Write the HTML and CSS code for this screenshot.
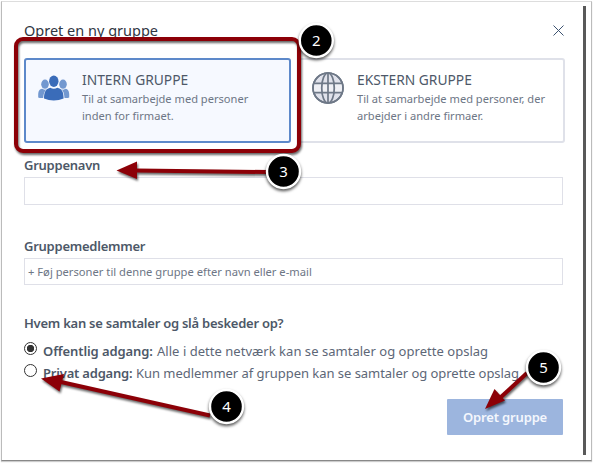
FILE: index.html
```html
<!DOCTYPE html>
<html lang="da">
<head>
  <meta charset="UTF-8">
  <meta name="viewport" content="width=device-width, initial-scale=1.0">
  <title>Opret en ny gruppe</title>
  <link rel="stylesheet" href="styles.css">
</head>
<body>
  <div class="modal">
    <form class="group-form">
      <header class="modal-header">
        <h1>Opret en ny gruppe</h1>
        <svg class="close-icon" viewBox="0 0 11 11"><path d="M0.5 0.5L10.5 10.5M10.5 0.5L0.5 10.5"/></svg>
      </header>

      <div class="group-types">
        <div class="type-card selected">
          <svg class="type-icon people" viewBox="0 0 32 26">
            <g fill="#7298d0">
              <ellipse cx="7" cy="9.2" rx="3.8" ry="4.6"/>
              <ellipse cx="25" cy="9.2" rx="3.8" ry="4.6"/>
              <path d="M0.2 22.5V19C0.2 15.5 2.2 13.8 4.5 13.8Q7 15.4 9 14C6.5 16 5.5 18.5 5.2 23Q2 23.3 0.2 22.5Z"/>
              <path d="M31.2 22.5V19C31.2 15.5 29.2 13.8 27.3 13.8Q25 15.4 23 14C25.5 16 26.2 18.5 26.5 23Q29.5 23.3 31.2 22.5Z"/>
            </g>
            <g fill="#3a6cb9">
              <ellipse cx="15.8" cy="6.3" rx="4.7" ry="5.7"/>
              <path d="M6 23.5C6 16 8.5 13.5 12.3 12.7Q15.8 15 19.3 12.7C23.5 13.5 25.6 16 25.6 23.5Q21 25.4 15.8 25.4T6 23.5Z"/>
            </g>
          </svg>
          <div class="type-text">
            <h2>INTERN GRUPPE</h2>
            <p>Til at samarbejde med personer<br>inden for firmaet.</p>
          </div>
        </div>
        <div class="type-card">
          <svg class="type-icon globe" viewBox="0 0 32 32">
            <circle class="globe-fill" cx="16" cy="16" r="15"/>
            <path class="globe-light" d="M11 11.5h10v9H11zM2 11.5h7v9H2zM23 11.5h7v9h-7z"/>
            <circle cx="16" cy="16" r="15"/>
            <ellipse cx="16" cy="16" rx="6.3" ry="15"/>
            <path d="M16 1V31M2 11.3H30M2 20.7H30"/>
          </svg>
          <div class="type-text">
            <h2>EKSTERN GRUPPE</h2>
            <p>Til at samarbejde med personer, der<br>arbejder i andre firmaer.</p>
          </div>
        </div>
      </div>

      <label class="field-label name-label">Gruppenavn</label>
      <div class="field name-field"></div>

      <label class="field-label members-label">Gruppemedlemmer</label>
      <div class="field members-field">+ Føj personer til denne gruppe efter navn eller e-mail</div>

      <div class="field-label access-label">Hvem kan se samtaler og slå beskeder op?</div>
      <div class="option">
        <span class="radio checked"></span>
        <span class="option-title">Offentlig adgang:</span>
        <span class="option-text">Alle i dette netværk kan se samtaler og oprette opslag</span>
      </div>
      <div class="option">
        <span class="radio"></span>
        <span class="option-title private">Privat adgang:</span>
        <span class="option-text private">Kun medlemmer af gruppen kan se samtaler og oprette opslag</span>
      </div>

      <div class="actions">
        <button type="button" class="submit">Opret gruppe</button>
      </div>
    </form>
    <div class="page-edge"></div>
  </div>

  <!-- step markers and arrows drawn over the dialog -->
  <svg class="annotations" viewBox="0 0 593 463">
    <g class="mark">
      <rect x="16" y="39" width="283" height="112" rx="7"/>
      <path d="M136 170.5L270 172"/>
      <path class="head" d="M116.5 170.5L137 161.5V179Z"/>
      <path d="M61 382L210 415.5"/>
      <path class="head" d="M41 378.5L64 374L59.5 391.5Z"/>
      <path d="M501 397L527 373"/>
      <path class="head" d="M485 409L494.5 389L505 400.5Z"/>
    </g>
    <g class="badge">
      <circle cx="316.3" cy="40.5" r="16.5"/>
      <circle cx="283.5" cy="171.5" r="16.5"/>
      <circle cx="226.5" cy="406.5" r="16.5"/>
      <circle cx="543.5" cy="367.5" r="16.5"/>
    </g>
    <g class="number">
      <text x="316.3" y="46">2</text>
      <text x="283.5" y="177">3</text>
      <text x="226.5" y="412">4</text>
      <text x="543.5" y="373">5</text>
    </g>
  </svg>
</body>
</html>
```
FILE: styles.css
```css
* {
  margin: 0;
  padding: 0;
  box-sizing: border-box;
}
body {
  width: 593px;
  height: 463px;
  padding: 1px 1px 0;
  overflow: hidden;
  background: #fff;
  color: #4d5868;
  font-family: 'Noto Sans', sans-serif;
}
.modal {
  display: flex;
  width: 591px;
  height: 460px;
  border: 1px solid #bbb;
  border-top-color: #ddd;
  border-bottom-color: #888;
  box-shadow: 0 1px 1px #ccc;
  background: #fff;
}
.group-form {
  width: 581px;
  padding: 18px 0 0 22px;
}
.page-edge {
  width: 3px;
  height: 449px;
  margin-top: 4px;
  background: #595959;
}
.modal-header {
  display: flex;
  justify-content: space-between;
  width: 540px;
  height: 38px;
}
.modal-header h1 {
  font-size: 14.5px;
  font-weight: 400;
  line-height: 20px;
  color: #303642;
  white-space: nowrap;
}
.close-icon {
  width: 11px;
  height: 11px;
  margin-top: 5px;
  fill: none;
  stroke: #3c5270;
}
.group-types {
  display: flex;
  gap: 7px;
  width: 541px;
  height: 85px;
}
.type-card {
  display: flex;
  flex: 1;
  border: 2px solid #dfe1e9;
  border-radius: 3px;
  padding: 12px 0 0 12px;
  white-space: nowrap;
}
.type-card.selected {
  border-color: #5d89ca;
  background: #f6f9ff;
}
.people {
  width: 32px;
  height: 26px;
  margin: 3px 12px 0 0;
}
.globe {
  width: 32px;
  height: 32px;
  margin-right: 13px;
  fill: none;
  stroke: #6e7887;
  stroke-width: 1.7;
}
.globe .globe-fill {
  fill: #e0e2eb;
}
.globe .globe-light {
  fill: #eff0f5;
  stroke: none;
}
.type-text h2 {
  font-size: 13.8px;
  font-weight: 400;
  line-height: 15px;
}
.type-text p {
  margin-top: 3px;
  font-size: 11.1px;
  line-height: 17px;
  color: #6d7685;
}
.field-label {
  display: block;
  font-size: 13px;
  font-weight: 600;
  line-height: 18px;
  letter-spacing: -0.25px;
  white-space: nowrap;
}
.name-label {
  margin-top: 13px;
}
.field {
  width: 539px;
  height: 28px;
  border: 1px solid #dfe0e8;
}
.name-field {
  margin-top: 3px;
}
.members-label {
  margin-top: 32px;
}
.members-field {
  height: 27px;
  margin-top: 3px;
  padding-left: 3px;
  font-size: 11.2px;
  line-height: 26px;
  color: #6d7685;
  white-space: nowrap;
}
.access-label {
  margin-top: 29px;
}
.option {
  display: flex;
  height: 22px;
  font-size: 13px;
  line-height: 22px;
  white-space: nowrap;
}
.access-label + .option {
  margin-top: 8px;
}
.radio {
  width: 13px;
  height: 13px;
  margin: 2px 6px 0 0;
  border: 1px solid #333;
  border-radius: 50%;
}
.radio.checked {
  background: radial-gradient(circle, #333 3.4px, #fff 4px);
}
.option-title {
  width: 114px;
  font-weight: 600;
  letter-spacing: -0.1px;
}
.option-title.private {
  width: 93px;
  letter-spacing: -0.2px;
}
.option-text {
  color: #5d6777;
  letter-spacing: 0.03px;
}
.option-text.private {
  letter-spacing: -0.04px;
}
.actions {
  display: flex;
  justify-content: flex-end;
  width: 539px;
  margin-top: 15px;
}
.submit {
  width: 116px;
  height: 36px;
  border: none;
  border-radius: 1px;
  background: #9cb5de;
  color: #f4f7fd;
  font-family: inherit;
  font-size: 13px;
  font-weight: 600;
  letter-spacing: -0.15px;
}
.annotations {
  position: absolute;
  top: 0;
  left: 0;
  width: 593px;
  height: 463px;
}
.mark {
  fill: none;
  stroke: #8c0007;
  stroke-width: 4;
  filter: drop-shadow(1px 2px 1px rgba(0, 0, 0, 0.6));
}
.mark .head {
  fill: #8c0007;
  stroke: none;
}
.badge {
  fill: #000;
  stroke: #fff;
  stroke-width: 2.4;
  filter: drop-shadow(0 2px 1.5px rgba(0, 0, 0, 0.65));
}
.number {
  fill: #fff;
  font-family: 'Noto Sans', sans-serif;
  font-size: 15px;
  text-anchor: middle;
}
```
